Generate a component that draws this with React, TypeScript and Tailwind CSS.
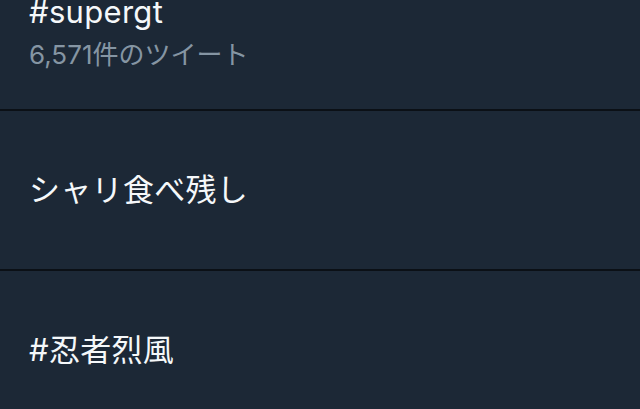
const rows = [
  { title: "#supergt", sub: "6,571件のツイート" },
  { title: "シャリ食べ残し" },
  { title: "#忍者烈風" },
];

export default function App() {
  return (
    <div
      className="w-[640px] h-[409px] overflow-hidden bg-[#1c2836]"
      style={{ fontFamily: '"Inter", "Noto Sans CJK JP", sans-serif' }}
    >
      <div className="-mt-[49px] flex flex-col">
        {rows.map((r, i) => (
          <div
            key={i}
            className="h-[160px] shrink-0 flex flex-col justify-center px-[29px] border-b-2 border-[#0b1016]"
          >
            <div className="text-[31px] leading-[40px] tracking-[0.3px] text-[#f5f8fa]">{r.title}</div>
            {r.sub && (
              <div className="text-[26px] leading-[32px] mt-[7px] -mb-[3px] text-[#8595a3]">{r.sub}</div>
            )}
          </div>
        ))}
      </div>
    </div>
  );
}
